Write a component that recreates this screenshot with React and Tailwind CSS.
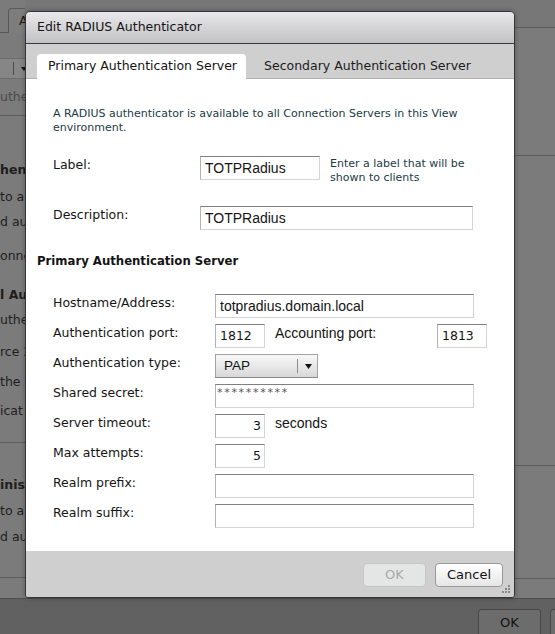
import React from "react"

const dv = "font-['DejaVu_Sans',Verdana,sans-serif]"
const ar = "font-['Liberation_Sans',Arial,sans-serif]"

const boxBorder =
  "border border-t-[#7f7f7f] border-l-[#b2b2b2] border-r-[#d4d4d4] border-b-[#d4d4d4] bg-white"

const leftRows = [
  { mt: "mt-[8px]", text: "uthe", cls: "text-[#4c4c4c]" },
  { line: true, mt: "mt-[8px]" },
  { mt: "mt-[44px]", text: "hent", cls: "font-bold" },
  { mt: "mt-[7px]", text: "to a", cls: "" },
  { mt: "mt-[5px]", text: "d au", cls: "" },
  { mt: "mt-[14px]", text: "onne", cls: "" },
  { mt: "mt-[19px]", text: "l Au", cls: "font-bold" },
  { mt: "mt-[5px]", text: "uthe", cls: "" },
  { mt: "mt-[12px]", text: "rce 2", cls: "" },
  { mt: "mt-[10px]", text: "the", cls: "" },
  { mt: "mt-[9px]", text: "icat", cls: "" },
  { line: true, mt: "mt-[21px]" },
  { mt: "mt-[32px]", text: "inis", cls: "font-bold" },
  { mt: "mt-[6px]", text: "to a", cls: "" },
  { mt: "mt-[6px]", text: "d au", cls: "" },
  { line: true, mt: "mt-[30px]" },
]

function BackgroundLeft() {
  // only the strip left of the dialog is visible, so clip it there
  return (
    <div className="w-[25px] shrink-0 flex flex-col overflow-hidden">
      <div className="h-[33px] flex items-end">
        <div className="w-[8px] shrink-0 h-full border-b border-[#595959]" />
        <div className="w-[40px] shrink-0 h-[25px] rounded-t-[4px] border border-b-0 border-[#595959] bg-[#7d7d7d] pl-[10px] flex items-center text-[#1a1a1a]">
          A
        </div>
      </div>
      <div className="mt-[25px] h-[21px] bg-[#868686] border-y border-[#6c6c6c] flex items-center">
        <div className="w-[13px] shrink-0" />
        <div className="w-px shrink-0 h-[13px] bg-[#4c4c4c]" />
        <svg className="ml-[7px] shrink-0" width="6" height="4" viewBox="0 0 6 4">
          <path d="M0 0h6L3 4z" fill="#151515" />
        </svg>
      </div>
      {leftRows.map((r, i) =>
        r.line ? (
          <div key={i} className={`h-px bg-[#5c5c5c] ${r.mt}`} />
        ) : (
          <div key={i} className={`h-5 leading-5 whitespace-nowrap text-[#1e1e1e] ${r.mt} ${r.cls}`}>
            {r.text}
          </div>
        )
      )}
    </div>
  )
}

function BackgroundRight() {
  return (
    <div className="flex-1 flex flex-col">
      <div className="h-[28px] border-b border-[#5c5c5c] bg-[#777777]" />
      <div className="mt-[127px] h-px bg-[#5c5c5c]" />
      <div className="mt-[309px] h-px bg-[#5c5c5c]" />
      <div className="mt-[112px] h-px bg-[#5c5c5c]" />
    </div>
  )
}

function Box({ width, children, right }) {
  return (
    <div className={`h-6 shrink-0 flex items-center ${boxBorder} ${width} ${right ? "justify-end pr-[3px]" : "pl-[4px]"}`}>
      {children}
    </div>
  )
}

function Row({ label, children }) {
  return (
    <div className="flex items-start h-6">
      <div className="w-[162px] shrink-0 pt-[1px] leading-[16px]">{label}</div>
      {children}
    </div>
  )
}

function Dialog() {
  return (
    <div className="absolute left-[25px] top-[11px] w-[490px] h-[587px] flex flex-col border border-[#363636] rounded-t-[5px] rounded-b-[3px] overflow-hidden shadow-[0_0_5px_rgba(0,0,0,0.3)] text-[12.5px] text-[#141414]">
      <div className="h-[32px] shrink-0 border-b border-[#3a3a3a] bg-linear-to-b from-[#e9e9eb] to-[#c2c2c4] flex items-center pl-[11px]">
        Edit RADIUS Authenticator
      </div>
      <div className="h-[35px] shrink-0 bg-[#cfcfcf] border-b border-[#b2b2b2] flex items-end pl-[11px]">
        <div className="relative -mb-px w-[209px] h-[25px] bg-white rounded-t-[4px] pl-[11px] flex items-center">
          Primary Authentication Server
        </div>
        <div className="h-[24px] pl-[18px] flex items-center text-[#1c1c1c]">
          Secondary Authentication Server
        </div>
      </div>

      <div className="flex-1 bg-white flex flex-col">
        <div className="mt-[28px] pl-[27px] text-[11px] leading-[14px] text-[#1b3a47]">
          A RADIUS authenticator is available to all Connection Servers in this View
          <br />
          environment.
        </div>

        <div className="mt-[21px] pl-[27px] flex items-start h-6">
          <div className="w-[147px] shrink-0 pt-[1px] leading-[16px]">Label:</div>
          <div className={`h-6 w-[120px] shrink-0 flex items-center pl-[4px] ${boxBorder} ${ar} text-[14px]`}>
            TOTPRadius
          </div>
          <div className="ml-[10px] mt-px text-[11px] leading-[14px] text-[#1b3a47]">
            Enter a label that will be
            <br />
            shown to clients
          </div>
        </div>

        <div className="mt-[26px] pl-[27px] flex items-start h-6">
          <div className="w-[147px] shrink-0 pt-[1px] leading-[16px]">Description:</div>
          <div className={`h-6 w-[273px] shrink-0 flex items-center pl-[4px] ${boxBorder} ${ar} text-[14px]`}>
            TOTPRadius
          </div>
        </div>

        <div className="mt-[23px] pl-[11px] text-[11.7px] leading-[16px] font-bold">
          Primary Authentication Server
        </div>

        <div className="mt-[25px] pl-[27px] flex flex-col gap-[6px]">
          <Row label="Hostname/Address:">
            <Box width="w-[259px]">
              <span className={`${ar} text-[14px]`}>totpradius.domain.local</span>
            </Box>
          </Row>
          <Row label="Authentication port:">
            <Box width="w-[50px]">1812</Box>
            <div className={`ml-[10px] w-[162px] shrink-0 pt-[1px] leading-[16px] ${ar} text-[14px]`}>
              Accounting port:
            </div>
            <Box width="w-[50px]">1813</Box>
          </Row>
          <Row label="Authentication type:">
            <div className="h-6 w-[103px] shrink-0 flex items-center border border-[#a3a3a3] border-b-[#8a8a8a] bg-linear-to-b from-[#f8f8f8] to-[#d8d8d8]">
              <span className={`pl-[8px] w-[81px] ${ar} text-[13.5px]`}>PAP</span>
              <div className="w-px h-[14px] bg-[#8c8c8c]" />
              <svg className="ml-[7px]" width="7" height="5" viewBox="0 0 7 5">
                <path d="M0 0h7L3.5 5z" fill="#111" />
              </svg>
            </div>
          </Row>
          <Row label="Shared secret:">
            <div className={`h-6 w-[259px] shrink-0 pl-[1px] pt-[1px] text-[11px] leading-[14px] tracking-[1.7px] text-[#555] ${boxBorder}`}>
              **********
            </div>
          </Row>
          <Row label="Server timeout:">
            <Box width="w-[50px]" right>3</Box>
            <div className={`ml-[10px] pt-[1px] leading-[16px] ${ar} text-[14px]`}>seconds</div>
          </Row>
          <Row label="Max attempts:">
            <Box width="w-[50px]" right>5</Box>
          </Row>
          <Row label="Realm prefix:">
            <Box width="w-[259px]" />
          </Row>
          <Row label="Realm suffix:">
            <Box width="w-[259px]" />
          </Row>
        </div>
      </div>

      <div className="relative h-[46px] shrink-0 bg-[#cfcfcf] flex justify-end items-start pt-[12px] pr-[11px] gap-[9px]">
        <div className="w-[63px] h-[24px] rounded-[4px] border border-[#c4c6c6] bg-[#e4e6e6] flex items-center justify-center text-[13px] text-[#a8aaaa]">
          OK
        </div>
        <div className="w-[68px] h-[24px] rounded-[4px] border border-[#999999] bg-linear-to-b from-[#ffffff] to-[#e6e6e6] flex items-center justify-center text-[13px] text-[#111]">
          Cancel
        </div>
        <svg className="absolute right-[3px] bottom-[3px]" width="9" height="9" viewBox="0 0 9 9">
          <rect x="6" y="0" width="2" height="2" fill="#8a8a8a" />
          <rect x="3" y="3" width="2" height="2" fill="#8a8a8a" />
          <rect x="6" y="3" width="2" height="2" fill="#8a8a8a" />
          <rect x="0" y="6" width="2" height="2" fill="#8a8a8a" />
          <rect x="3" y="6" width="2" height="2" fill="#8a8a8a" />
          <rect x="6" y="6" width="2" height="2" fill="#8a8a8a" />
        </svg>
      </div>
    </div>
  )
}

export default function App() {
  return (
    <div className={`relative w-[555px] h-[634px] overflow-hidden bg-[#7b7b7b] ${dv} text-[12.5px] text-[#1c1c1c]`}>
      <div className="flex h-[598px]">
        <BackgroundLeft />
        <BackgroundRight />
      </div>
      <div className="h-[36px] bg-[#616161] border-t border-[#4f4f4f] flex items-start pt-[10px] pl-[478px] gap-[9px]">
        <div className="w-[63px] h-[28px] shrink-0 rounded-[3px] border border-[#474747] bg-[#6c6c6c] flex items-center justify-center text-[13px] text-[#111]">
          OK
        </div>
        <div className="w-[70px] h-[28px] shrink-0 rounded-[3px] border border-[#474747] bg-[#6c6c6c]" />
      </div>
      <Dialog />
    </div>
  )
}
